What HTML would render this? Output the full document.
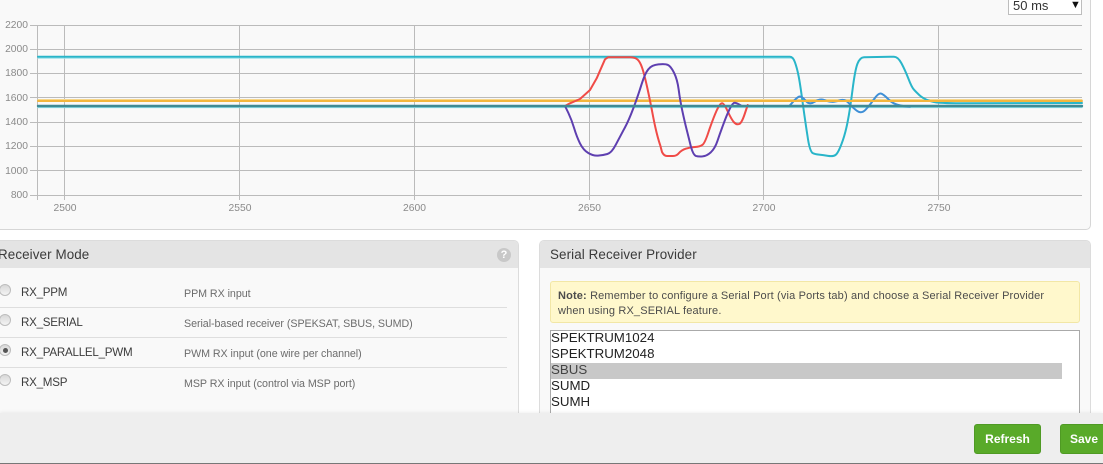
<!DOCTYPE html>
<html><head><meta charset="utf-8"><style>
html,body{margin:0;padding:0;background:#fff}
body{width:1103px;height:464px;position:relative;overflow:hidden;font-family:"Liberation Sans",sans-serif;color:#333}
div{position:absolute;box-sizing:border-box;white-space:nowrap}
.top{left:-10px;top:-10px;width:1101px;height:240px;background:#f9f9f9;border:1px solid #d6d6d6;border-radius:5px}
.panel{top:240px;height:190px;background:#f9f9f9;border:1px solid #dcdcdc;border-radius:5px;overflow:hidden}
.hd{left:0;top:0;right:0;height:27px;background:#e4e4e4}
.t{font-size:13.4px;letter-spacing:.1px;color:#3a3a3a;top:246px;line-height:17px}
.sep{left:-5px;width:512px;height:1px;background:#dedede}
.lab{left:21px;font-size:11.6px;letter-spacing:-.25px;color:#3c3c3c;line-height:16px}
.desc{left:184px;font-size:10.7px;letter-spacing:-.05px;color:#6c6c6c;line-height:15px}
.r{left:-1px;width:12px;height:12px;border-radius:50%;border:1px solid #bdbdbd;background:linear-gradient(#d8d8d8,#f4f4f4)}
.opt{left:551px;font-size:13.3px;line-height:16px;color:#222}
.btn{top:424px;height:30px;background:#59aa29;border:1px solid #4f9a24;border-radius:3px;color:#fff;font-weight:bold;font-size:12px;line-height:28px;text-align:center}
svg text{font-family:"Liberation Sans",sans-serif;font-size:10.3px;fill:#8a8a8a}
</style></head><body>
<div class="top"></div>
<div style="left:1008px;top:-6px;width:74px;height:21px;background:#fff;border:1px solid #bdbdbd"></div>
<div style="left:1013px;top:-2px;font-size:13px;line-height:15px;color:#333">50 ms</div>
<div style="left:1070px;top:-1px;font-size:11px;line-height:12px;color:#111">▼</div>
<svg width="1103" height="232" style="position:absolute;left:0;top:0">
<g stroke="#bbb" stroke-width="1" fill="none">
<path d="M30 25.5H1082M30 49.5H1082M30 73.5H1082M30 97.5H1082M30 122.5H1082M30 146.5H1082M30 170.5H1082M30 195.5H1082"/>
<path d="M37.5 25V200M64.5 25V200M239.5 25V200M414.5 25V200M589.5 25V200M763.5 25V200M938.5 25V200"/>
</g>
<g text-anchor="end">
<text x="28" y="28">2200</text><text x="28" y="52">2000</text><text x="28" y="76">1800</text><text x="28" y="101">1600</text><text x="28" y="125">1400</text><text x="28" y="149">1200</text><text x="28" y="174">1000</text><text x="28" y="198">800</text>
</g>
<g text-anchor="middle">
<text x="65" y="211">2500</text><text x="240" y="211">2550</text><text x="414.5" y="211">2600</text><text x="589.5" y="211">2650</text><text x="764" y="211">2700</text><text x="939" y="211">2750</text>
</g>
<g fill="none" stroke-width="2" stroke-linejoin="round" stroke-linecap="round">
<path stroke="#9be4ec" stroke-width="1" d="M38 58.2H792"/>
<path stroke="#8fe0ea" stroke-width="1.5" d="M38 107.4H1082"/>
<path stroke="#f6d68a" stroke-width="1" d="M38 99.5H1082"/>
<path stroke="#29b5c9" d="M38 56.8L790 56.7Q793 56.7 795 62.4Q797 68 798.5 75.5Q800 83 802.5 101.5Q805 120 807.5 136Q809.5 150.5 812.5 153Q815 154.3 819 154.6Q823 155 828 155.9Q833 156.7 835.5 155Q838 153.3 841.5 144Q845 135 847.5 122.5Q850 110 852.5 90Q855 70 857.5 63.6Q860 57.3 864 57.2L894 56.7Q898 56.7 901.5 63.4Q905 70 908.4 78.6Q911.7 87.3 914 89.7Q916 92 919.5 95.2Q923 98.3 928 100.3Q933 102.3 940 102.8Q947 103.3 960 103.2L1082 103"/>
<path stroke="#3f8fd6" d="M790 105.3Q796.7 97.3 799.2 96.6Q801.7 96 805.5 100.6Q809.3 105.3 814.6 101.8Q820 98.3 824.2 100Q828.3 101.7 831.6 101.8Q835 102 840 100.3Q845 98.7 849.2 103.5Q853.3 108.3 857.5 111.2Q861.7 114 865.8 109.5Q870 105 874.2 99Q878.3 93 880.8 93.5Q883.3 94 889.2 100Q895 106 910 106.7"/>
<path stroke="#f3b63d" d="M38 101H1082"/>
<path stroke="#f04b47" d="M565 106L570 103.3Q575 101.2 580 99Q585 94.5 590 90Q593.3 84.2 596.7 78.3Q600.8 68.8 605 59.3Q606.5 58.3 608 57.3Q612 57.3 616 57.3L630 57.3Q635 57.3 637.5 59.5Q640 61.7 642 67.4Q644 73 647 86.5Q650 100 653.3 117.5Q656.7 135 660.3 145.5L662 152Q664 156 667 156L673 156Q676.7 156 679 153Q681.7 150 685.8 148.7Q690 147.3 695 147Q700 146.7 702.5 144.8Q705 143 709 130.5Q713.3 118 716.6 110.6Q720 103.3 722 103.2Q724 103 727.8 111.5Q731.7 120 734.2 122.5Q736.7 125 739.2 124Q741.7 123 744.7 114L747.7 105"/>
<path stroke="#5e3fb0" d="M565 106L568.4 113Q571.7 120 574.2 128.4Q576.7 136.7 580 143.4Q583.3 150 588.3 153Q593.3 156 598 155.6Q603 155.3 607.4 154Q611.7 152.7 615.8 144.7Q620 136.7 624 129.2Q628.3 121.7 633.3 108.4Q638.3 95 641.6 84.2Q645 73.3 648.4 69.2Q651.7 65 658.4 64.4Q665 63.7 667.9 64.9Q670.7 66 674 72.7Q677.3 79.3 678.7 89.7Q680 100 682.5 111.7Q685 123.3 687.2 131.7Q689.3 140 691 147Q693.3 155 695.8 155.9Q698.3 156.7 702.5 156.4Q706.7 156 710.9 152.2Q715 148.3 717.5 140.8Q720 133.3 723.4 124.2Q726.7 115 729.7 108.9Q732.7 102.7 734.7 102.7Q736.7 102.7 741.7 106"/>
<path stroke="#3f8a94" stroke-width="2.4" d="M38 106H1082"/>
</g>
</svg>

<div class="panel" style="left:-10px;width:529px"><div class="hd"></div></div>
<div class="t" style="left:-2px">Receiver Mode</div>
<div style="left:497px;top:248px;width:14px;height:14px;border-radius:50%;background:#c8c8c8;color:#fff;font-size:11px;font-weight:bold;line-height:14px;text-align:center">?</div>
<div class="sep" style="top:307px"></div><div class="sep" style="top:337px"></div><div class="sep" style="top:367px"></div>
<div class="r" style="top:284px"></div><div class="r" style="top:314px"></div>
<div class="r" style="top:344px"></div><div style="left:3px;top:348px;width:5px;height:5px;border-radius:50%;background:#555"></div>
<div class="r" style="top:374px"></div>
<div class="lab" style="top:285px">RX_PPM</div><div class="lab" style="top:315px">RX_SERIAL</div><div class="lab" style="top:345px">RX_PARALLEL_PWM</div><div class="lab" style="top:375px">RX_MSP</div>
<div class="desc" style="top:287px">PPM RX input</div><div class="desc" style="top:317px">Serial-based receiver (SPEKSAT, SBUS, SUMD)</div><div class="desc" style="top:347px">PWM RX input (one wire per channel)</div><div class="desc" style="top:377px">MSP RX input (control via MSP port)</div>

<div class="panel" style="left:539px;width:552px"><div class="hd"></div></div>
<div class="t" style="left:550px">Serial Receiver Provider</div>
<div style="left:550px;top:281px;width:530px;height:42px;background:#fff8cc;border:1px solid #f2e7a6;border-radius:3px"></div>
<div style="left:558px;top:289px;font-size:11px;letter-spacing:.15px;line-height:15px;color:#4c4c4c"><b>Note:</b> Remember to configure a Serial Port (via Ports tab) and choose a Serial Receiver Provider<br>when using RX_SERIAL feature.</div>
<div style="left:550px;top:330px;width:530px;height:90px;background:#fff;border:1px solid #aaa"></div>
<div style="left:551px;top:363px;width:511px;height:16px;background:#c8c8c8"></div>
<div class="opt" style="top:330px">SPEKTRUM1024</div><div class="opt" style="top:346px">SPEKTRUM2048</div><div class="opt" style="top:362px;color:#444">SBUS</div><div class="opt" style="top:378px">SUMD</div><div class="opt" style="top:394px">SUMH</div>

<div style="left:0;top:413px;width:1103px;height:51px;background:#eee;border-bottom:1px solid #777;box-shadow:0 -1px 3px rgba(0,0,0,.06)"></div>
<div class="btn" style="left:974px;width:67px">Refresh</div>
<div class="btn" style="left:1060px;width:60px;text-align:left;padding-left:9px">Save</div>
</body></html>
